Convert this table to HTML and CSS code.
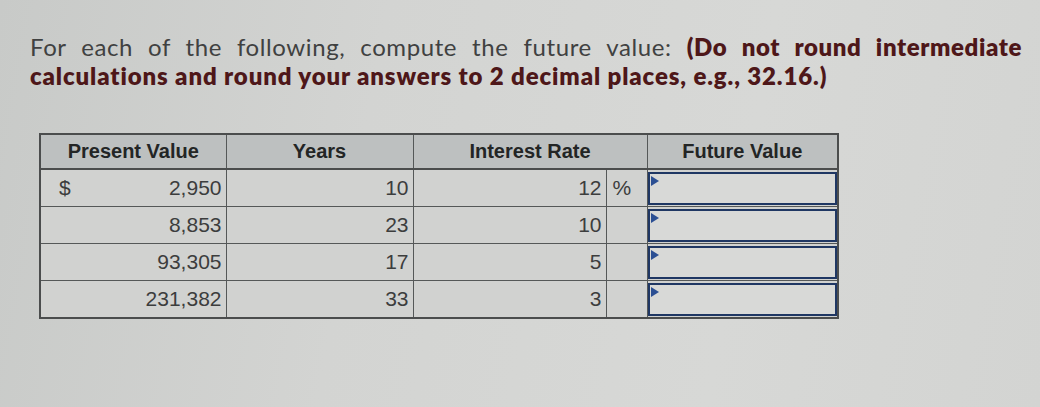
FILE: index.html
```html
<!DOCTYPE html>
<html>
<head>
<meta charset="utf-8">
<link rel="stylesheet" href="styles.css">
</head>
<body>
<div class="page">
  <p class="question"><span class="line1">For each of the following, compute the future value: <b>(Do not round intermediate</b></span> <span class="line2"><b>calculations and round your answers to 2 decimal places, e.g., 32.16.)</b></span></p>
  <table class="grid">
    <colgroup>
      <col class="w-pv"><col class="w-yr"><col class="w-ir"><col class="w-pc"><col class="w-fv">
    </colgroup>
    <thead>
      <tr>
        <th>Present Value</th>
        <th>Years</th>
        <th colspan="2">Interest Rate</th>
        <th>Future Value</th>
      </tr>
    </thead>
    <tbody>
      <tr>
        <td class="pv"><span class="dollar">$</span><span class="amt">2,950</span></td>
        <td class="num">10</td>
        <td class="num">12</td>
        <td class="pct">%</td>
        <td class="fv"><div class="inp"><span class="flag"></span></div></td>
      </tr>
      <tr>
        <td class="pv"><span class="amt">8,853</span></td>
        <td class="num">23</td>
        <td class="num">10</td>
        <td class="pct"></td>
        <td class="fv"><div class="inp"><span class="flag"></span></div></td>
      </tr>
      <tr>
        <td class="pv"><span class="amt">93,305</span></td>
        <td class="num">17</td>
        <td class="num">5</td>
        <td class="pct"></td>
        <td class="fv"><div class="inp"><span class="flag"></span></div></td>
      </tr>
      <tr>
        <td class="pv"><span class="amt">231,382</span></td>
        <td class="num">33</td>
        <td class="num">3</td>
        <td class="pct"></td>
        <td class="fv"><div class="inp"><span class="flag"></span></div></td>
      </tr>
    </tbody>
  </table>
</div>
</body>
</html>
```
FILE: styles.css
```css
html, body {
  margin: 0;
  padding: 0;
}
body {
  width: 1040px;
  height: 407px;
  overflow: hidden;
  background: linear-gradient(100deg, #c8cac8 0%, #d3d4d2 35%, #d7d8d6 70%, #d3d4d2 100%);
}
.page {
  padding: 32px 18px 0 30px;
}
.question {
  margin: 0;
  width: 992px;
  font-family: "Lato", "Noto Sans", sans-serif;
  font-size: 24px;
  line-height: 29px;
  color: #404141;
}
.line1 {
  display: block;
  text-align: justify;
  text-align-last: justify;
  letter-spacing: 0.6px;
}
.line2 {
  display: block;
  letter-spacing: 0.88px;
}
.question b {
  color: #4e1719;
  font-weight: 800;
}
.grid {
  margin: 43px 0 0 9px;
  border-collapse: collapse;
  table-layout: fixed;
  width: 800px;
  font-family: "Liberation Sans", Arial, sans-serif;
  color: #3c3d3d;
  border: 2px solid #4b4d4d;
}
.w-pv { width: 186px; }
.w-yr { width: 187px; }
.w-ir { width: 193px; }
.w-pc { width: 41px; }
.w-fv { width: 191px; }
.grid th {
  height: 33px;
  padding: 0;
  background: #bdc0c0;
  font-size: 20px;
  font-weight: 700;
  color: #232525;
  text-align: center;
  border: 1px solid #555858;
  border-bottom: 2px solid #4b4d4d;
}
.grid td {
  height: 36px;
  padding: 0;
  background: #d1d2d0;
  font-size: 21px;
  border: 1px solid #555858;
}
.pv {
  padding: 0 4px 0 18px !important;
}
.amt {
  float: right;
}
.dollar {
  float: left;
}
.num {
  text-align: right;
  padding-right: 4px !important;
}
.pct {
  padding-left: 6px !important;
}
.fv {
  padding: 0 !important;
}
.inp {
  position: relative;
  height: 33px;
  margin: 1px 0;
  border: 2px solid #1f3763;
  background: #d8d9d7;
  box-sizing: border-box;
}
.flag {
  position: absolute;
  left: 1px;
  top: 2px;
  width: 0;
  height: 0;
  border-top: 5px solid transparent;
  border-bottom: 5px solid transparent;
  border-left: 8px solid #2b4f93;
}
```
